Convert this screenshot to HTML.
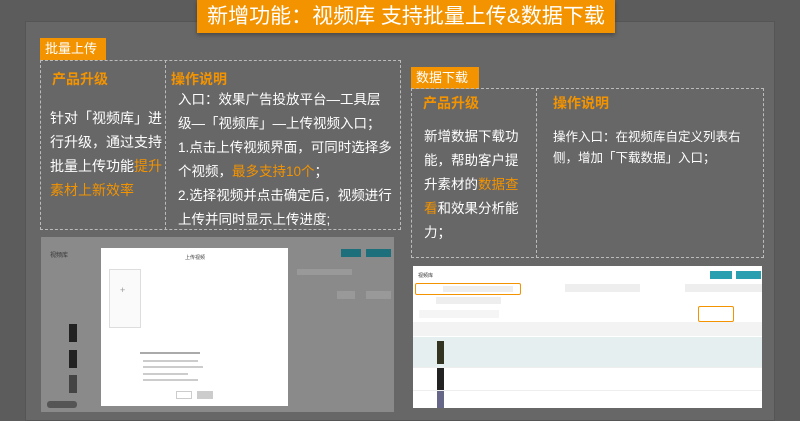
<!DOCTYPE html>
<html><head><meta charset="utf-8"><style>
*{margin:0;padding:0;box-sizing:border-box}
body{width:800px;height:415px;overflow:hidden;background:#5c5c5c;font-family:"Liberation Sans","Noto Sans CJK SC",sans-serif;position:relative;color:#fff}
.a{position:absolute;white-space:nowrap}
.panel{left:25px;top:21px;width:750px;height:400px;background:#676767;border:1px solid #555}
.title{left:197px;top:0;width:418px;height:33px;background:#f39300;color:#fff;font-size:21px;line-height:33px;text-align:center;box-shadow:0 2px 4px rgba(0,0,0,.3)}
.lab{background:#f39300;color:#fff;font-size:13px;line-height:22px;padding-left:5px}
.box{border:1px dashed #bbb}
.o{color:#f39300}
.h{color:#f39300;font-size:14px;font-weight:bold}
.g{background:#8a8a8a}
.w{background:#fff}
.bt{background:#2a9fb0}
.ln{background:#ddd}
</style></head><body>
<div class="a panel"></div>
<div class="a title">新增功能：视频库 支持批量上传&amp;数据下载</div>

<div class="a lab" style="left:40px;top:38px;width:66px">批量上传</div>
<div class="a box" style="left:40px;top:60px;width:361px;height:170px"></div>
<div class="a" style="left:165px;top:60px;width:0;height:170px;border-left:1px dashed #bbb"></div>
<div class="a h" style="left:52px;top:69px">产品升级</div>
<div class="a" style="left:50px;top:106px;font-size:14px;line-height:24px">针对「视频库」进<br>行升级，通过支持<br>批量上传功能<span class="o">提升</span><br><span class="o">素材上新效率</span></div>
<div class="a h" style="left:171px;top:69px">操作说明</div>
<div class="a" style="left:178px;top:88px;font-size:13.5px;line-height:24px">入口：效果广告投放平台—工具层<br>级—「视频库」—上传视频入口；<br>1.点击上传视频界面，可同时选择多<br>个视频，<span class="o">最多支持10个</span>；<br>2.选择视频并点击确定后，视频进行<br>上传并同时显示上传进度;</div>

<div class="a lab" style="left:411px;top:67px;width:68px">数据下载</div>
<div class="a box" style="left:411px;top:88px;width:353px;height:170px"></div>
<div class="a" style="left:536px;top:88px;width:0;height:170px;border-left:1px dashed #bbb"></div>
<div class="a h" style="left:423px;top:93px">产品升级</div>
<div class="a" style="left:424px;top:125px;font-size:13.5px;line-height:24px">新增数据下载功<br>能，帮助客户提<br>升素材的<span class="o">数据查</span><br><span class="o">看</span>和效果分析能<br>力；</div>
<div class="a h" style="left:553px;top:93px">操作说明</div>
<div class="a" style="left:553px;top:127px;font-size:12.5px;line-height:21px">操作入口：在视频库自定义列表右<br>侧，增加「下载数据」入口；</div>

<!-- left screenshot -->
<div class="a g" style="left:41px;top:237px;width:353px;height:175px"></div>
<div class="a" style="left:50px;top:250px;font-size:6px;color:#333">视频库</div>
<div class="a" style="left:341px;top:249px;width:20px;height:8px;background:#1d6f7c"></div>
<div class="a" style="left:366px;top:249px;width:25px;height:8px;background:#1d6f7c"></div>
<div class="a" style="left:297px;top:269px;width:55px;height:6px;background:#999"></div>
<div class="a" style="left:337px;top:291px;width:18px;height:8px;background:#999"></div>
<div class="a" style="left:366px;top:291px;width:25px;height:8px;background:#999"></div>
<div class="a" style="left:69px;top:324px;width:8px;height:18px;background:#222"></div>
<div class="a" style="left:69px;top:350px;width:8px;height:18px;background:#222"></div>
<div class="a" style="left:69px;top:375px;width:8px;height:18px;background:#444"></div>
<div class="a w" style="left:101px;top:248px;width:187px;height:158px"></div>
<div class="a" style="left:185px;top:254px;font-size:5px;color:#444">上传视频</div>
<div class="a" style="left:109px;top:269px;width:32px;height:59px;border:1px solid #ddd;background:#fafafa"></div>
<div class="a" style="left:120px;top:285px;font-size:9px;color:#999">+</div>
<div class="a" style="left:140px;top:352px;width:60px;height:2px;background:#aaa"></div>
<div class="a" style="left:143px;top:360px;width:55px;height:2px;background:#ccc"></div>
<div class="a" style="left:143px;top:366px;width:60px;height:2px;background:#ccc"></div>
<div class="a" style="left:143px;top:373px;width:45px;height:2px;background:#ccc"></div>
<div class="a" style="left:143px;top:379px;width:55px;height:2px;background:#ccc"></div>
<div class="a" style="left:176px;top:391px;width:16px;height:8px;border:1px solid #ccc"></div>
<div class="a" style="left:197px;top:391px;width:16px;height:8px;background:#ccc"></div>
<div class="a" style="left:47px;top:401px;width:30px;height:7px;background:#555;border-radius:3px"></div>

<!-- right screenshot -->
<div class="a w" style="left:413px;top:266px;width:349px;height:142px"></div>
<div class="a" style="left:418px;top:272px;font-size:5px;color:#333">视频库</div>
<div class="a bt" style="left:710px;top:271px;width:22px;height:8px"></div>
<div class="a bt" style="left:736px;top:271px;width:25px;height:8px"></div>
<div class="a" style="left:415px;top:283px;width:106px;height:12px;border:1px solid #f39300;border-radius:2px"></div>
<div class="a" style="left:443px;top:286px;width:70px;height:6px;background:#eee"></div>
<div class="a" style="left:565px;top:284px;width:75px;height:8px;background:#eee"></div>
<div class="a" style="left:685px;top:284px;width:77px;height:8px;background:#eee"></div>
<div class="a" style="left:436px;top:297px;width:65px;height:7px;background:#eee"></div>
<div class="a" style="left:419px;top:310px;width:80px;height:8px;background:#f5f5f5"></div>
<div class="a" style="left:698px;top:306px;width:36px;height:16px;border:1px solid #f39300;border-radius:2px"></div>
<div class="a" style="left:413px;top:322px;width:349px;height:14px;background:#f3f3f3"></div>
<div class="a" style="left:413px;top:337px;width:349px;height:30px;background:#e6efef"></div>
<div class="a" style="left:437px;top:341px;width:7px;height:23px;background:#332"></div>
<div class="a" style="left:437px;top:368px;width:7px;height:22px;background:#222"></div>
<div class="a" style="left:437px;top:391px;width:7px;height:17px;background:#668"></div>
<div class="a" style="left:413px;top:367px;width:349px;height:1px;background:#eee"></div>
<div class="a" style="left:413px;top:390px;width:349px;height:1px;background:#eee"></div>
</body></html>
